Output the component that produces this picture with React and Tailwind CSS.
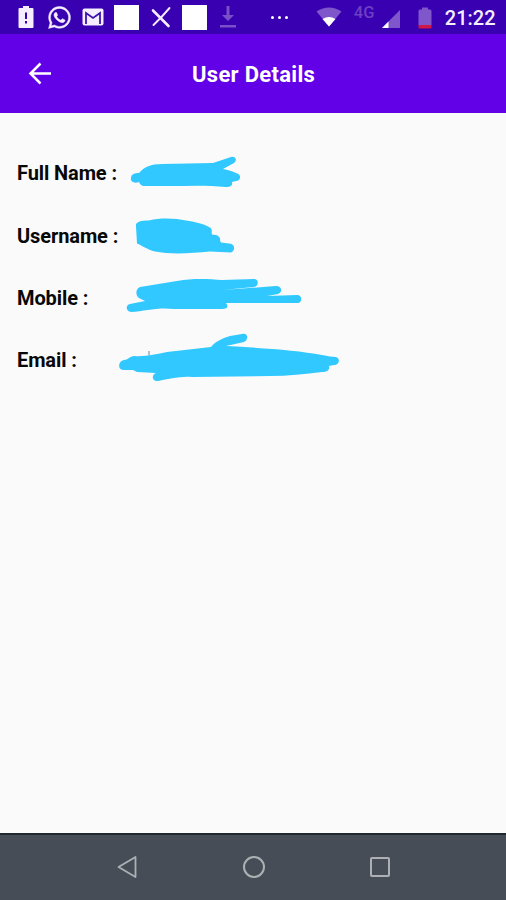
import { FaWhatsapp } from 'react-icons/fa';

const fields = [
  {
    label: 'Full Name :',
    viewBox: '117 142 240 62',
    shape: 'M131 178 C131 174 135 173 139 173 C144 167 151 164 162 164 L213 163 L231 157 C235 156 238 160 234 163 L223 169 C230 170 233 172 236 173 C242 174 241 181 236 181 L232 182 C233 186 230 187 226 187 C207 185 187 186 169 186 L145 186 C141 186 140 184 139 182 C134 184 130 181 131 178 Z',
  },
  {
    label: 'Username :',
    viewBox: '117 204.5 240 62',
    shape: 'M136 226 C135 221 141 220 149 220 C161 217 176 218 186 220 C194 221 203 223 210 227 C213 229 211 232 212 234 C218 234 221 237 220 240 L221 242 L229 243 C235 243 236 250 231 252 L210 251 C190 253 170 254 155 251 C147 249 142 245 137 243 Z',
  },
  {
    label: 'Mobile :',
    viewBox: '117 267 240 62',
    shape: 'M140 287 C153 285 164 283 177 281 C193 278 209 279 222 280 L254 279 C259 279 259 286 254 287 L222 290 L276 286 C282 286 283 292 278 294 L267 296 L297 295 C303 295 302 303 298 303 L226 303 C229 307 227 309 222 309 L174 309 C158 307 145 311 131 312 C126 312 125 305 130 304 L145 301 L141 299 C135 297 135 289 140 287 Z',
  },
  {
    label: 'Email :',
    viewBox: '117 329 240 62',
    mark: 'M149 351v4',
    shape: 'M124 360 C128 360 130 356 134 356 C145 357 156 354 167 352 L211 347 C217 340 224 338 230 336 L242 334 C248 332 249 340 244 342 L226 346 C262 348 297 350 322 355 C328 356 332 357 336 357 C341 359 339 365 334 365 L329 366 C330 370 327 372 322 372 C305 374 288 376 270 376 L192 377 C180 376 169 379 158 381 C152 382 151 375 156 373 L137 372 L133 370 L124 370 C117 370 118 361 124 360 Z',
  },
];

function Cell({ children }) {
  return <div className="flex h-full w-[33.7px] shrink-0 items-center justify-center">{children}</div>;
}

function StatusBar() {
  return (
    <div className="flex h-[34px] items-center bg-[#3800b1] pl-[9px] text-[#f4eeff]">
      <Cell>
        <svg width="16" height="24" viewBox="0 0 16 24">
          <path d="M5 1h6v2h3.500q1 0 1 1v18q0 1-1 1h-13q-1 0-1-1V4q0-1 1-1H5z" fill="currentColor" />
          <path d="M8 7.500v6.500M8 16v2.500" stroke="#3800b1" strokeWidth="2" />
        </svg>
      </Cell>
      <Cell><FaWhatsapp size={25} stroke="currentColor" strokeWidth={10} /></Cell>
      <Cell>
        <svg width="22" height="18" viewBox="0 0 22 18">
          <rect x="0.5" y="0.5" width="21" height="17" rx="2" fill="currentColor" />
          <path d="M4 16V5L11 10l7-5v11" fill="none" stroke="#3d12ac" strokeWidth="1.800" />
        </svg>
      </Cell>
      <Cell><div className="h-[25px] w-[25px] bg-white" /></Cell>
      <Cell>
        <svg width="20" height="22" viewBox="0 0 20 22" fill="none" stroke="currentColor" strokeLinecap="round">
          <path d="M2 4.500L17.500 20" strokeWidth="2.600" />
          <path d="M18.500 2L10.500 11L2.500 19" strokeWidth="1.900" />
        </svg>
      </Cell>
      <Cell><div className="h-[25px] w-[25px] bg-white" /></Cell>
      <Cell>
        <svg width="16" height="22" viewBox="0 0 16 22" fill="#7950c8">
          <path d="M6.500 0h3v9H14l-6 6-6-6h4.500zM0 19h16v2.500H0z" />
        </svg>
      </Cell>
      <div className="ml-[26px] flex gap-[4px]">
        <div className="h-[3px] w-[3px] rounded-full bg-white" />
        <div className="h-[3px] w-[3px] rounded-full bg-white" />
        <div className="h-[3px] w-[3px] rounded-full bg-white" />
      </div>
      <svg className="ml-[28px] shrink-0" width="26" height="20" viewBox="0 0 26 20">
        <path d="M0.500 4.500Q13-3.500 25.500 4.500L13 19.500z" fill="#8056cb" />
        <path d="M6.500 12Q13 8 19.500 12L13 19.500z" fill="white" />
      </svg>
      <span className="mb-[7px] ml-[12px] w-[22px] shrink-0 font-['Roboto',sans-serif] text-[16.500px] leading-none font-medium text-[#6d3fc3]">4G</span>
      <svg className="mt-[3px] ml-[6px] shrink-0" width="18" height="18" viewBox="0 0 18 18">
        <path d="M0 18L18 0v18z" fill="#8056cb" />
        <path d="M0 18l6.500-6.500V18z" fill="white" />
      </svg>
      <svg className="mt-[1px] ml-[18px] shrink-0" width="14" height="22" viewBox="0 0 14 22">
        <path d="M4 0.500h6v2h2q1.500 0 1.500 1.500V18h-13V4q0-1.500 1.500-1.500h2z" fill="#8056cb" />
        <path d="M0.500 18h13v2.500q0 1-1 1h-11q-1 0-1-1z" fill="#cf1748" />
      </svg>
      <span className="mt-[2px] ml-[13px] font-['Roboto',sans-serif] text-[20px] leading-none font-medium">21:22</span>
    </div>
  );
}

function Header() {
  return (
    <header className="flex h-[78.500px] items-center bg-[#6200e8] text-white">
      <svg className="ml-[28px] shrink-0" width="24" height="24" viewBox="0 0 24 24" fill="none" stroke="currentColor" strokeWidth="2.500">
        <path d="M23 12.500H2.500M12.500 2.500L2.500 12.500L12.500 22.500" />
      </svg>
      <h1 className="mt-[3px] ml-[140px] font-['Roboto',sans-serif] text-[22px] leading-none font-bold tracking-[0.300px] whitespace-nowrap">User Details</h1>
    </header>
  );
}

function Field({ label, viewBox, shape, mark }) {
  return (
    <div className="flex h-[62.400px] items-center">
      <span className="w-[100px] shrink-0 font-['Roboto',sans-serif] text-[20px] leading-none font-bold tracking-[-0.100px] whitespace-nowrap text-[#080808]">{label}</span>
      <svg className="shrink-0" width="240" height="62" viewBox={viewBox}>
        {mark && <path d={mark} stroke="#777c96" />}
        <path d={shape} fill="#30c8ff" />
      </svg>
    </div>
  );
}

function NavBar() {
  return (
    <nav className="flex h-[67px] items-center border-t-2 border-[#20282f] bg-[#464d56] pb-[2px] pl-[117px]">
      <svg width="20" height="24" viewBox="0 0 20 24" fill="none" stroke="#adb1b4" strokeWidth="1.800" strokeLinejoin="round">
        <path d="M18.500 2v20L1.500 12z" />
      </svg>
      <div className="ml-[106px] h-[22px] w-[22px] rounded-full border-2 border-[#adb1b4]" />
      <div className="ml-[105px] h-[20px] w-[20px] rounded-[2px] border-2 border-[#adb1b4]" />
    </nav>
  );
}

export default function App() {
  return (
    <div className="flex h-[900px] w-[506px] flex-col overflow-hidden bg-[#fafafa]">
      <StatusBar />
      <Header />
      <main className="flex-1 pt-[29.500px] pl-[17px]">
        {fields.map((field) => (
          <Field key={field.label} {...field} />
        ))}
      </main>
      <NavBar />
    </div>
  );
}
